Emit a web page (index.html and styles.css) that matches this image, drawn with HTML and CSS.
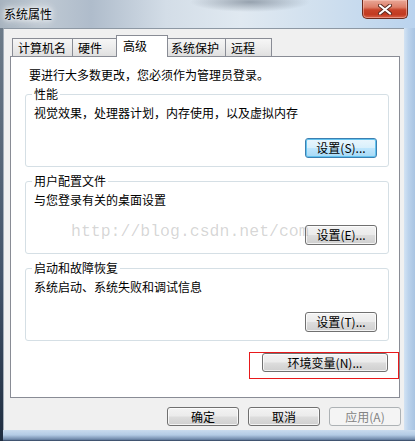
FILE: index.html
```html
<!DOCTYPE html>
<html lang="zh-CN">
<head>
<meta charset="utf-8">
<title>系统属性</title>
<link rel="stylesheet" href="styles.css">
</head>
<body>
<div class="window">
  <div class="titlebar">
    <span class="title">系统属性</span>
    <button class="close" aria-label="关闭">
      <svg width="14" height="11" viewBox="0 0 14 11">
        <path d="M2 1.5 L12 9.5 M12 1.5 L2 9.5" stroke="#5a2a20" stroke-width="4" stroke-linecap="round"/>
        <path d="M2 1.5 L12 9.5 M12 1.5 L2 9.5" stroke="#ffffff" stroke-width="2.2" stroke-linecap="round"/>
      </svg>
    </button>
  </div>
  <div class="client">
    <div class="tabs">
      <div class="tab">计算机名</div>
      <div class="tab">硬件</div>
      <div class="tab active">高级</div>
      <div class="tab">系统保护</div>
      <div class="tab">远程</div>
    </div>
    <div class="panel">
      <p class="intro">要进行大多数更改，您必须作为管理员登录。</p>
      <div class="group">
        <div class="group-title">性能</div>
        <div class="group-desc">视觉效果，处理器计划，内存使用，以及虚拟内存</div>
        <div class="group-actions"><button class="btn default">设置(S)...</button></div>
      </div>
      <div class="group">
        <div class="group-title">用户配置文件</div>
        <div class="group-desc">与您登录有关的桌面设置</div>
        <div class="group-actions"><button class="btn">设置(E)...</button></div>
      </div>
      <div class="group">
        <div class="group-title">启动和故障恢复</div>
        <div class="group-desc">系统启动、系统失败和调试信息</div>
        <div class="group-actions"><button class="btn">设置(T)...</button></div>
      </div>
      <div class="env-row">
        <div class="highlight"><button class="btn wide">环境变量(N)...</button></div>
      </div>
      <div class="watermark">http://blog.csdn.net/com</div>
    </div>
    <div class="footer">
      <button class="btn">确定</button>
      <button class="btn">取消</button>
      <button class="btn" disabled>应用(A)</button>
    </div>
  </div>
</div>
</body>
</html>
```

FILE: styles.css
```css
html, body {
  margin: 0;
  padding: 0;
  background: #ffffff;
}

body {
  font-family: "Noto Sans CJK SC", "Noto Sans", sans-serif;
  font-size: 12px;
  color: #000000;
}

.window {
  width: 415px;
  height: 441px;
  box-sizing: border-box;
  overflow: hidden;
  background:
    linear-gradient(180deg, #6d7b89 0%, #43546a 60%, #1f2d40 100%) 0 28px / 3px 413px no-repeat,
    linear-gradient(180deg, #c9dbee 0%, #b3cbe5 45%, #6f89aa 85%, #2c3e58 100%) 0 430px / 100% 11px no-repeat,
    linear-gradient(90deg, #d3e3f3 0%, #bcd3ec 40%, #a9c4e2 100%) 404px 28px / 11px 402px no-repeat,
    radial-gradient(ellipse 60px 10px at 250px 2px, rgba(120,132,146,0.7), rgba(120,132,146,0) 100%),
    linear-gradient(90deg, #a7b3bf 0%, #bfc9d3 10%, #afbccb 22%, #d3dde7 40%, #e0e9f1 58%, #cfdfee 78%, #bad3ee 100%);
}

.titlebar {
  height: 28px;
  display: flex;
  align-items: flex-start;
}

.title {
  margin: 7px 0 0 4px;
  line-height: 14px;
  font-size: 12px;
  color: #000;
  text-shadow: 0 0 4px #ffffff, 0 0 8px #ffffff, 0 0 8px #ffffff;
}

.close {
  margin-left: auto;
  margin-right: 7px;
  width: 46px;
  height: 19px;
  padding: 0;
  box-sizing: border-box;
  border: 1px solid #6b2a1d;
  border-top: 0;
  border-radius: 0 0 5px 5px;
  background: linear-gradient(180deg, #e9a797 0%, #dd7f69 40%, #c8432a 55%, #c23a20 80%, #d9624a 100%);
  box-shadow: inset 0 0 0 1px rgba(255, 210, 200, 0.45);
  display: flex;
  align-items: center;
  justify-content: center;
}

.close svg {
  display: block;
}

.client {
  margin-left: 3px;
  width: 401px;
  height: 402px;
  box-sizing: border-box;
  border-top: 1px solid #8d98a4;
  border-left: 1px solid #a3adb8;
  background: #f0f0f0;
  padding: 6px 0 0 6px;
}

.tabs {
  display: flex;
  align-items: flex-end;
  height: 21px;
  margin-left: 3px;
}

.tab {
  position: relative;
  height: 18px;
  min-width: 47px;
  box-sizing: border-box;
  margin-left: -1px;
  padding: 0 6px 0 5px;
  border: 1px solid #898c95;
  border-bottom: 0;
  background: linear-gradient(180deg, #f6f6f6 0%, #ececec 50%, #dfdfdf 100%);
  line-height: 17px;
  white-space: nowrap;
}

.tab.active {
  height: 22px;
  min-width: 52px;
  margin: 0 -2px -1px -3px;
  padding: 1px 6px 0 6px;
  background: #ffffff;
  z-index: 1;
}

.panel {
  position: relative;
  width: 390px;
  height: 342px;
  box-sizing: border-box;
  border: 1px solid #898c95;
  background: #ffffff;
  padding: 1px 0 0 0;
}

.intro {
  margin: 10px 0 0 18px;
  line-height: 14px;
}

.group {
  margin: 12px 10px 0 14px;
  border: 1px solid #d5dfe5;
  border-radius: 3px;
  padding: 0 11px 8px 0;
}

.group + .group {
  margin-top: 14px;
}

.group-title {
  width: max-content;
  margin: -8px 0 0 6px;
  padding: 0 2px;
  background: #ffffff;
  line-height: 14px;
}

.group-desc {
  margin: 5px 0 0 8px;
  line-height: 14px;
}

.group-actions {
  margin-top: 18px;
  display: flex;
  justify-content: flex-end;
}

.btn {
  width: 72px;
  height: 19px;
  box-sizing: border-box;
  padding: 0;
  border: 1px solid #707070;
  border-radius: 3px;
  background: linear-gradient(180deg, #f3f3f3 0%, #ebebeb 48%, #dddddd 52%, #cfcfcf 100%);
  box-shadow: inset 0 0 0 1px rgba(255, 255, 255, 0.75);
  font-family: "Noto Sans CJK SC", "Noto Sans", sans-serif;
  font-size: 12px;
  line-height: 16px;
  color: #000000;
  white-space: nowrap;
}

.group-actions .btn {
  height: 20px;
}

.btn.default {
  border-color: #3c7fb1;
  background: linear-gradient(180deg, #eaf6fd 0%, #d9f0fc 48%, #bee6fd 52%, #a7d9f5 100%);
  box-shadow: inset 0 0 0 1px #62c3ef;
}

.btn:disabled {
  border-color: #adb2b5;
  background: #f4f4f4;
  box-shadow: none;
  color: #838383;
}

.btn.wide {
  width: 126px;
}

.env-row {
  display: flex;
  justify-content: flex-end;
  margin-top: 11px;
}

.highlight {
  width: 150px;
  height: 27px;
  box-sizing: border-box;
  border: 1px solid #e8191b;
  padding: 0 0 0 12px;
}

.watermark {
  position: absolute;
  left: 60px;
  top: 165px;
  font-family: "Liberation Mono", "DejaVu Sans Mono", monospace;
  font-size: 16.5px;
  line-height: 20px;
  color: rgba(128, 128, 128, 0.33);
  white-space: nowrap;
  pointer-events: none;
}

.footer {
  display: flex;
  justify-content: flex-end;
  gap: 9px;
  margin-top: 9px;
  padding-right: 3px;
}
```
